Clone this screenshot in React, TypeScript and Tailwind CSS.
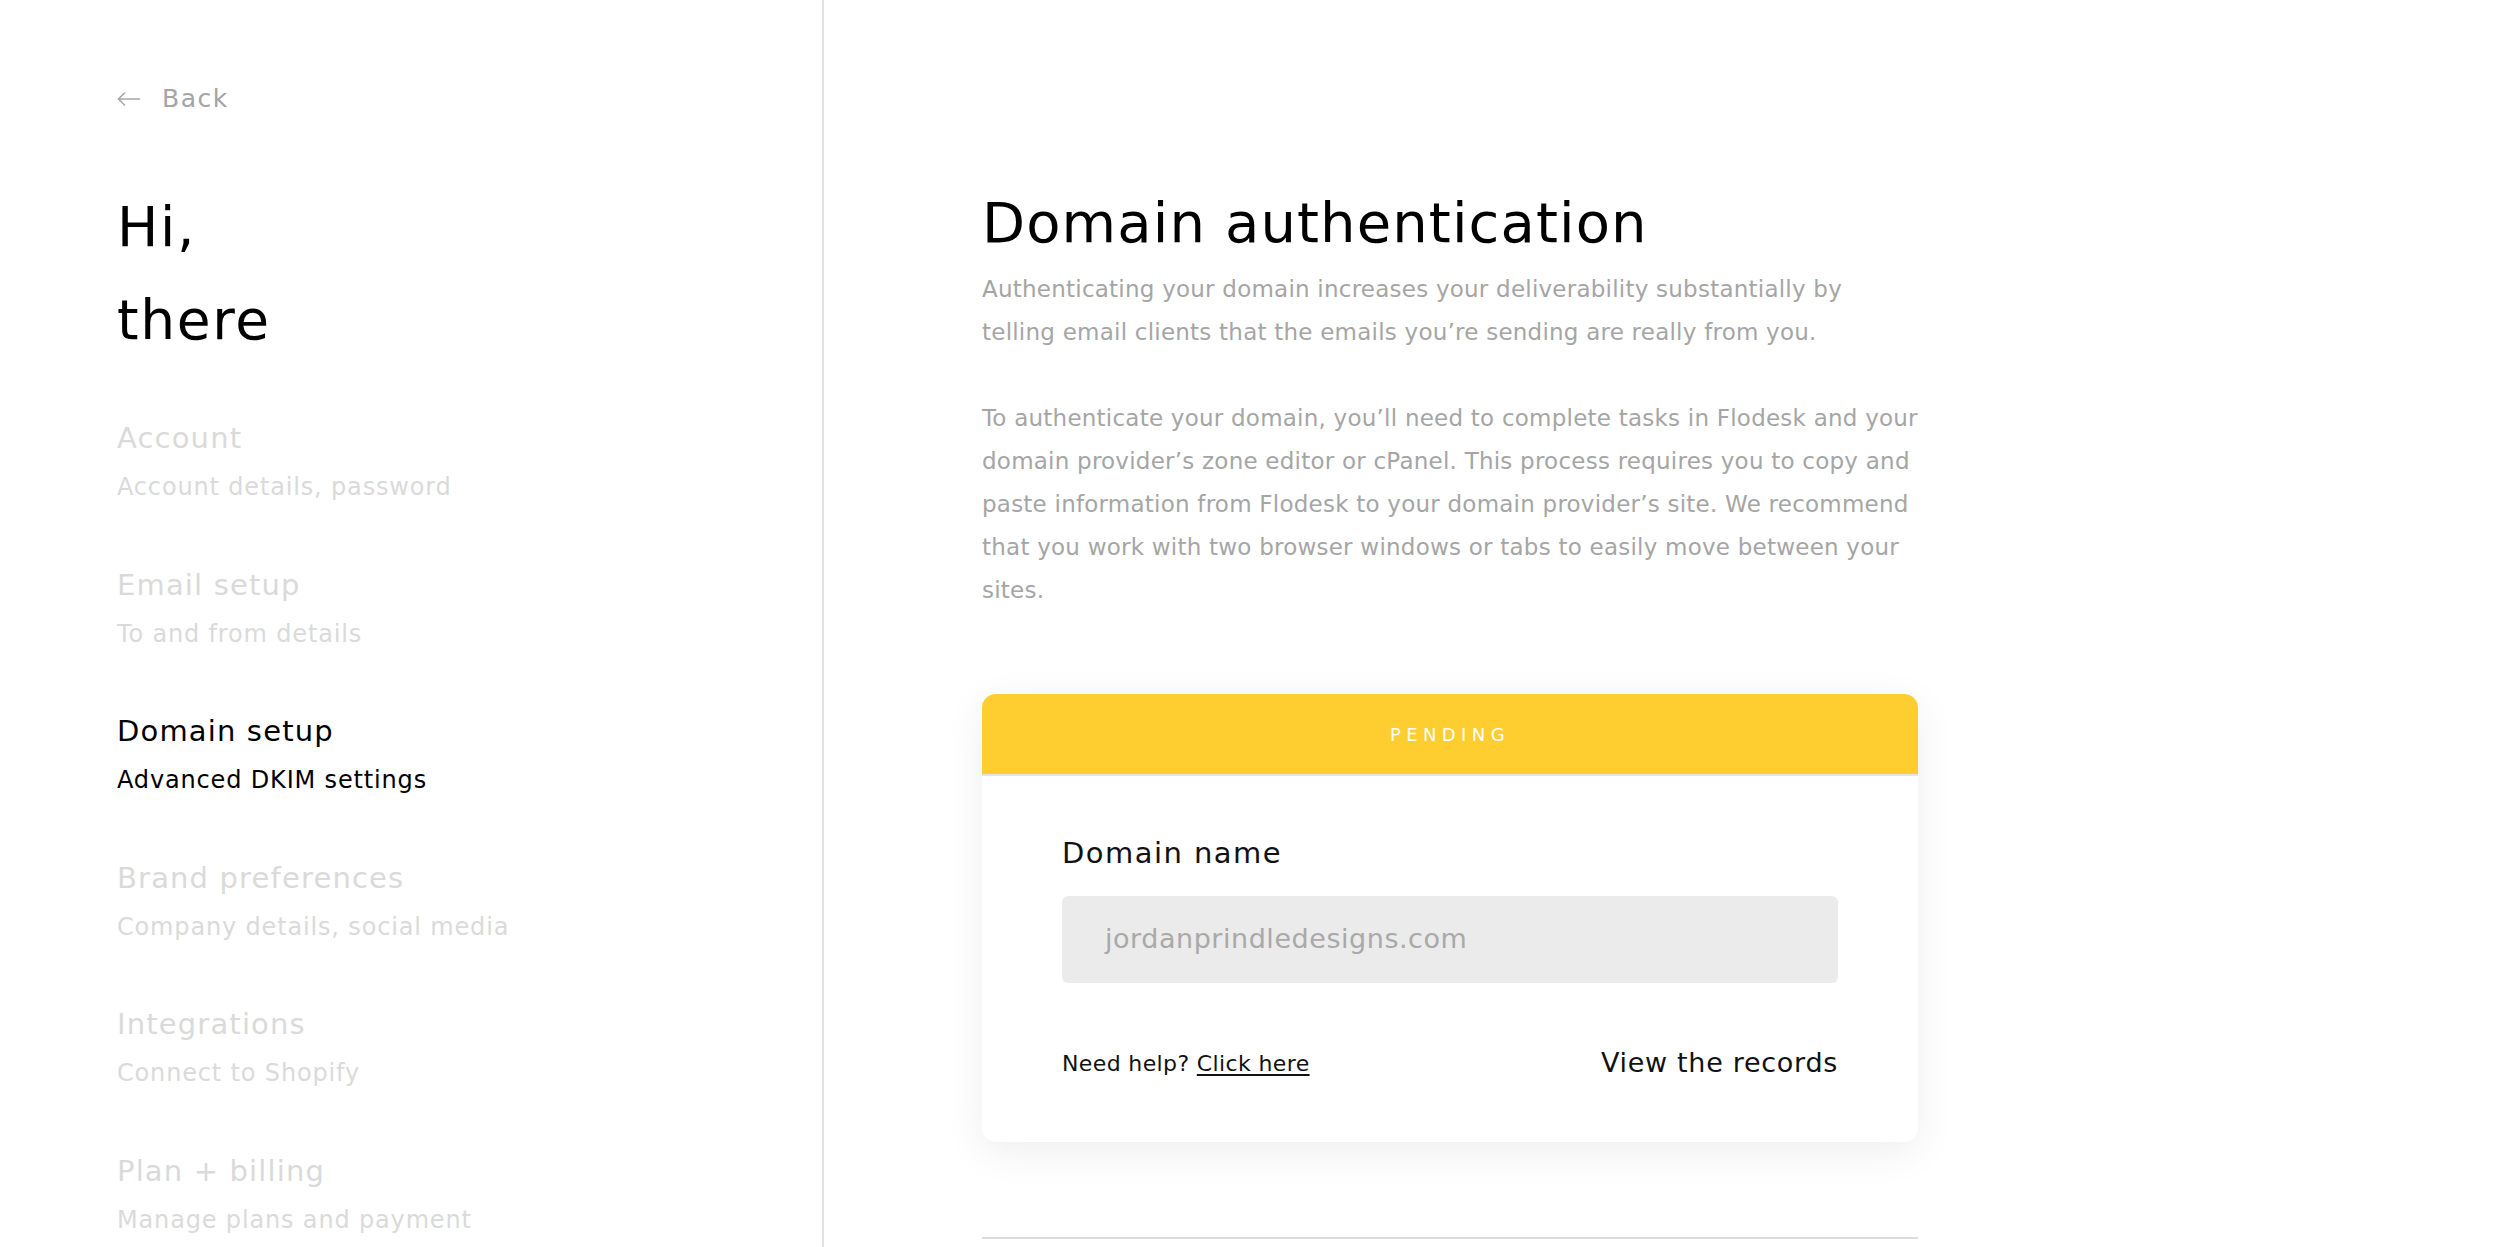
const NAV_ITEMS = [
  { title: "Account", sub: "Account details, password", active: false },
  { title: "Email setup", sub: "To and from details", active: false },
  { title: "Domain setup", sub: "Advanced DKIM settings", active: true },
  { title: "Brand preferences", sub: "Company details, social media", active: false },
  { title: "Integrations", sub: "Connect to Shopify", active: false },
  { title: "Plan + billing", sub: "Manage plans and payment", active: false },
];

function BackArrow() {
  return (
    <svg width="24" height="14" viewBox="0 0 24 14" fill="none" stroke="#a6a6a6" strokeWidth="1.6" strokeLinecap="round" strokeLinejoin="round">
      <path d="M1.5 7H22.5" />
      <path d="M7.5 1L1.5 7L7.5 13" />
    </svg>
  );
}

function Sidebar() {
  return (
    <aside className="w-[824px] shrink-0 h-full border-r-2 border-[#e2e2e2] pl-[117px] pt-[79px]">
      <div className="flex items-center gap-[21px] h-[40px] text-[25px] tracking-[0.06em] text-[#a4a4a4]">
        <BackArrow />
        <span>Back</span>
      </div>

      <h1 className="mt-[62px] text-[55px] leading-[93px] tracking-[0.03em] text-black">
        Hi,
        <br />
        there
      </h1>

      <nav className="mt-[51px] flex flex-col gap-[57.5px]">
        {NAV_ITEMS.map((item) => (
          <div key={item.title} className={item.active ? "text-black" : "text-[#dadada]"}>
            <div className="h-[40px] leading-[40px] text-[29px] tracking-[0.04em]">{item.title}</div>
            <div className="mt-[9px] h-[40px] leading-[40px] text-[24px] tracking-[0.035em]">{item.sub}</div>
          </div>
        ))}
      </nav>
    </aside>
  );
}

function StatusCard() {
  return (
    <div className="rounded-[14px] bg-white shadow-[0_10px_40px_rgba(0,0,0,0.07)] overflow-hidden">
      <div className="h-[82px] bg-[#fecd2f] border-b-2 border-[#e4e4e4] flex items-center justify-center text-white text-[18px] tracking-[0.3em]">
        PENDING
      </div>
      <div className="px-[80px] pt-[57px] pb-[59px]">
        <div className="h-[40px] leading-[40px] text-[29px] tracking-[0.05em] text-[#111]">Domain name</div>
        <div className="mt-[23px] h-[87px] rounded-[6px] bg-[#ebebeb] pl-[43px] flex items-center text-[27px] tracking-[0.02em] text-[#a9a9a9]">
          jordanprindledesigns.com
        </div>
        <div className="mt-[60px] h-[40px] flex items-center justify-between">
          <div className="text-[22px] tracking-[0.017em] text-[#111]">
            Need help? <span className="underline underline-offset-[3px]">Click here</span>
          </div>
          <div className="text-[27px] tracking-[0.026em] text-[#111]">View the records</div>
        </div>
      </div>
    </div>
  );
}

function Main() {
  return (
    <main className="flex-1 h-full pl-[158px] pt-[188px]">
      <div className="w-[936px]">
        <h2 className="h-[70px] leading-[70px] text-[56px] tracking-[0.02em] text-black whitespace-nowrap">Domain authentication</h2>
        <div className="text-[23px] leading-[43px] tracking-[0.01em] text-[#a5a5a5] whitespace-nowrap">
          <p className="mt-[10px]">
            Authenticating your domain increases your deliverability substantially by
            <br />
            telling email clients that the emails you’re sending are really from you.
          </p>
          <p className="mt-[43px]">
            To authenticate your domain, you’ll need to complete tasks in Flodesk and your
            <br />
            domain provider’s zone editor or cPanel. This process requires you to copy and
            <br />
            paste information from Flodesk to your domain provider’s site. We recommend
            <br />
            that you work with two browser windows or tabs to easily move between your
            <br />
            sites.
          </p>
        </div>

        <div className="mt-[82px]">
          <StatusCard />
        </div>

        <div className="mt-[95px] h-[2px] bg-[#dcdcdc]" />
      </div>
    </main>
  );
}

export default function App() {
  return (
    <div className="h-[1247px] w-full overflow-hidden bg-white flex font-['DejaVu_Sans','Liberation_Sans',sans-serif]">
      <Sidebar />
      <Main />
    </div>
  );
}
